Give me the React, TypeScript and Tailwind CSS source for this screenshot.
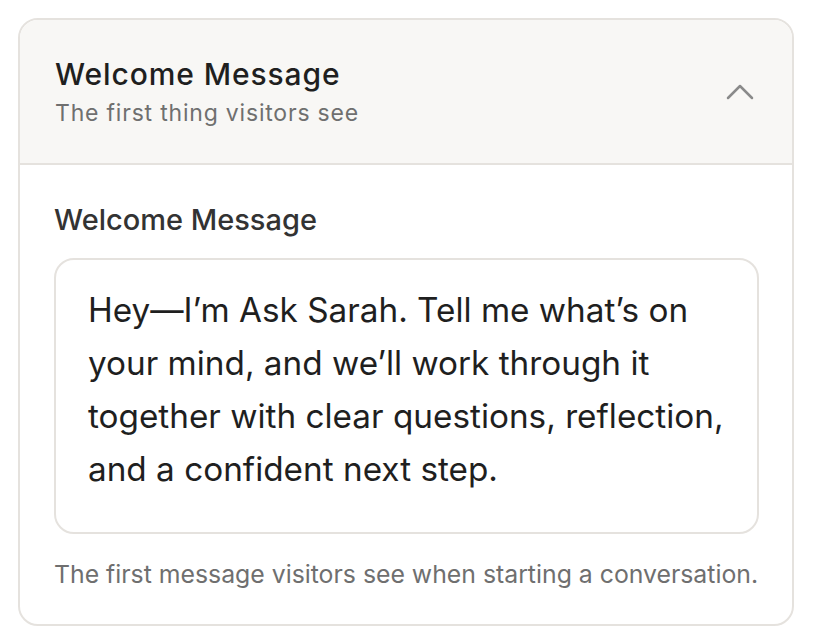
import React from "react";

export default function App() {
  return (
    <div className="w-[816px] h-[630px] bg-white pt-[18px] pl-[18px]" style={{ fontFamily: "Inter, 'Noto Sans', sans-serif" }}>
      <div className="w-[776px] h-[608px] border-2 border-[#e5e2de] rounded-[20px] overflow-hidden bg-white flex flex-col">
        <div className="h-[145px] shrink-0 bg-[#f8f7f5] border-b-2 border-[#e5e2de] flex items-center justify-between pl-[35px] pr-[28px]">
          <div className="flex flex-col">
            <div className="text-[30px] leading-[36px] font-medium text-[#1f1f1f] tracking-[0.9px]">Welcome Message</div>
            <div className="mt-[6px] text-[23px] leading-[30px] text-[#6f6f6f] tracking-[0.8px]">The first thing visitors see</div>
          </div>
          <svg width="48" height="48" viewBox="0 0 24 24" fill="none" stroke="#8a8a8a" strokeWidth="1.25" strokeLinecap="round" strokeLinejoin="round">
            <path d="m18 15-6-6-6 6" />
          </svg>
        </div>
        <div className="pt-[37px] pl-[34px] flex flex-col">
          <div className="text-[29px] leading-[36px] font-medium text-[#333333]">Welcome Message</div>
          <div className="mt-[20px] w-[705px] h-[276px] border-2 border-[#e5e2de] rounded-[20px] pl-[32px] pr-[18px] pt-[24px] text-[33.3px] leading-[53px] text-[#1f1f1f]">
            Hey—I’m Ask Sarah. Tell me what’s on your mind, and we’ll work through it together with clear questions, reflection, and a confident next step.
          </div>
          <div className="mt-[24px] text-[24.8px] leading-[32px] text-[#6f6f6f]">The first message visitors see when starting a conversation.</div>
        </div>
      </div>
    </div>
  );
}
